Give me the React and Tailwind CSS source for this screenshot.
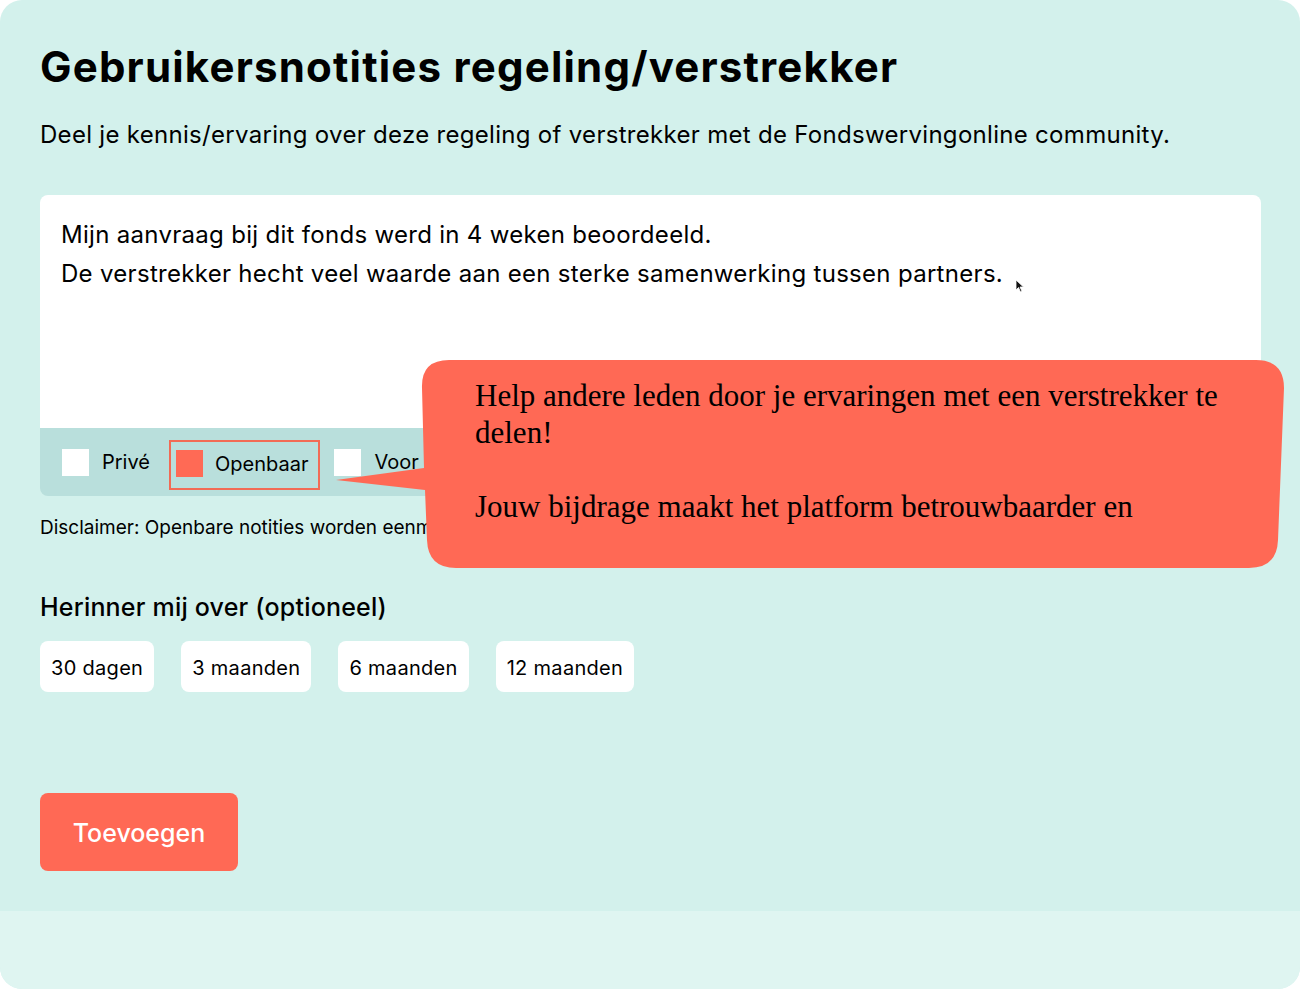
import React from 'react';

const chips = ['30 dagen', '3 maanden', '6 maanden', '12 maanden'];

const Checkbox = ({ checked }) => (
  <span className={`block h-[27px] w-[27px] shrink-0 ${checked ? 'bg-[#ff6a55]' : 'bg-white'}`} />
);

const App = () => {
  return (
    <div className="relative w-[1300px] h-[989px] bg-white font-['Inter',sans-serif] text-black">
      <div className="flex h-full flex-col overflow-hidden rounded-[22px] bg-[#d3f1ec]">
        {/* Main form */}
        <div className="flex-1 pl-10 pt-[41px]">
          <h1 className="text-[42px] font-bold leading-[52px] tracking-[1.2px]">
            Gebruikersnotities regeling/verstrekker
          </h1>
          <p className="mt-[27px] text-[24px] leading-[30px] tracking-[0.3px]">
            Deel je kennis/ervaring over deze regeling of verstrekker met de Fondswervingonline community.
          </p>

          {/* Note card */}
          <div className="mt-[45px] w-[1221px] overflow-hidden rounded-[8px]">
            <div className="h-[233px] bg-white px-[21px] pt-[20px] text-[24px] leading-[39px] tracking-[0.3px]">
              <p>Mijn aanvraag bij dit fonds werd in 4 weken beoordeeld.</p>
              <p className="flex items-end">
                De verstrekker hecht veel waarde aan een sterke samenwerking tussen partners.
                <svg width="10" height="14" viewBox="0 0 10 14" className="mb-[0px] ml-[12px]">
                  <path d="M1 1 L1 11 L3.5 8.5 L5.5 13 L7 12.3 L5 8 L8.5 8 Z" fill="#111" stroke="#fff" strokeWidth="0.8" />
                </svg>
              </p>
            </div>
            <div className="flex h-[68px] items-center bg-[#b9dfdc] pl-[22px] text-[20px]">
              <Checkbox />
              <span className="ml-[13px]">Privé</span>
              <div className="ml-[19px] mt-[6px] flex h-[50px] items-center border-2 border-[#f26b55] pl-[5px] pr-[10px]">
                <span className="-mt-[4px]"><Checkbox checked /></span>
                <span className="ml-[12px] -mt-[3px]">Openbaar</span>
              </div>
              <span className="ml-[14px]"><Checkbox /></span>
              <span className="ml-[13px]">Voor iedereen</span>
            </div>
          </div>

          <p className="mt-[20px] text-[19px] leading-[24px]">
            Disclaimer: Openbare notities worden eenmalig gecontroleerd.
          </p>

          <h2 className="mt-[52px] text-[25px] font-medium leading-[30px] tracking-[0.2px]">Herinner mij over (optioneel)</h2>
          <div className="mt-[19px] flex gap-[27px]">
            {chips.map((c) => (
              <button key={c} className="h-[51px] rounded-[8px] bg-white px-[11px] pt-[3px] text-[20px] tracking-[0.3px]">
                {c}
              </button>
            ))}
          </div>

          <button className="mt-[101px] h-[78px] w-[198px] rounded-[8px] bg-[#ff6955] pt-[3px] text-[25px] font-medium text-white">
            Toevoegen
          </button>
        </div>
        <div className="h-[78px] bg-[#dff5f1]" />
      </div>

      {/* Callout bubble */}
      <svg className="absolute left-[330px] top-[355px]" width="960" height="220" viewBox="0 0 960 220">
        <path
          d="M119 5 L926 5 Q954 5 954 33 L948 185 Q947 213 919 213 L126 213 Q98 213 97 185 L95 135 L6 125 L94 113 L92 33 Q91 5 119 5 Z"
          fill="#ff6955"
        />
      </svg>
      <div className="absolute left-[475px] top-[377px] w-[770px] font-['Liberation_Serif',serif] text-[31px] leading-[37px]">
        <p>Help andere leden door je ervaringen met een verstrekker te delen!</p>
        <p className="mt-[37px]">Jouw bijdrage maakt het platform betrouwbaarder en</p>
      </div>
    </div>
  );
};

export default App;
